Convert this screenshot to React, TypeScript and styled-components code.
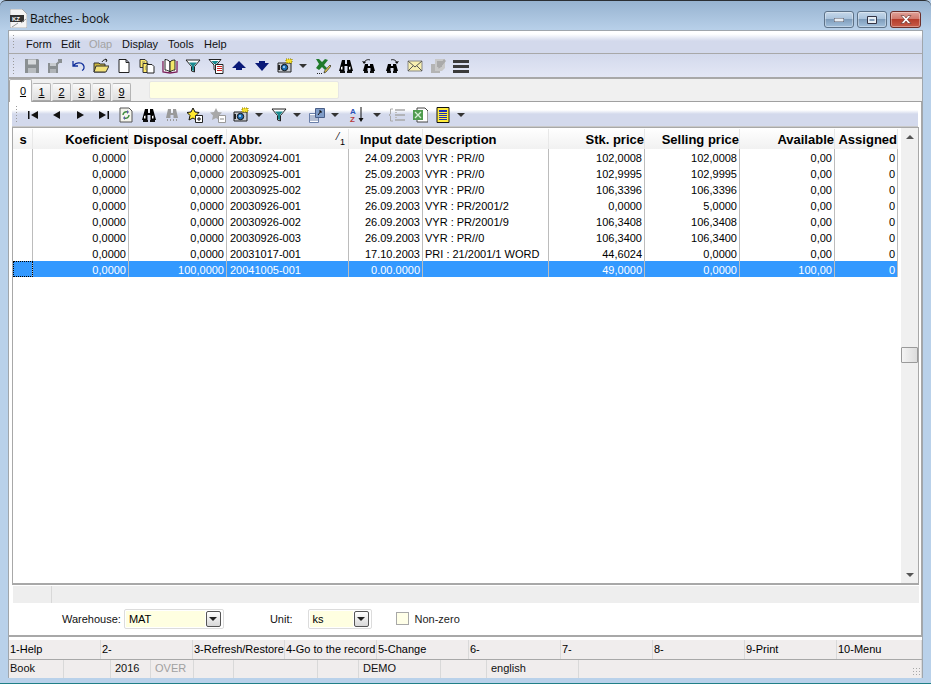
import React from "react";
import styled, { createGlobalStyle } from "styled-components";

const GlobalStyle = createGlobalStyle`
  html, body { margin: 0; padding: 0; background: #b9d1ea; }
  body { font-family: "Liberation Sans", Arial, sans-serif; font-size: 11px; color: #000; overflow: hidden; }
`;

const COLS = "20px 96px 98px 122px 74px 126px 96px 95px 95px 63px";

const Win = styled.div`
  width: 931px;
  height: 684px;
  box-sizing: border-box;
  display: flex;
  flex-direction: column;
  padding: 0 8px 0 8px;
  border-radius: 6px 6px 0 0;
  border-top: 1px solid #2b2f33;
  border-bottom: 1px solid #1f7f86;
  background: linear-gradient(#97b3d0 0, #b9d1ea 30px, #b9d1ea 100%);
`;

const TitleBar = styled.div`
  height: 29px;
  flex: none;
  box-sizing: border-box;
  display: flex;
  align-items: center;
  gap: 3px;
  padding: 5px 0 0 2px;
  color: #111;
`;

const TitleText = styled.span`
  flex: 1;
  font-family: "Open Sans", "Liberation Sans", sans-serif;
  font-size: 12px;
  letter-spacing: -0.25px;
`;

const WinBtns = styled.div`
  display: flex;
  gap: 3px;
  margin-right: 2px;
  align-self: flex-start;
  margin-top: 5px;
`;

const WinBtn = styled.div<{ $close?: boolean }>`
  width: ${(p) => (p.$close ? 31 : 30)}px;
  height: 17px;
  box-sizing: border-box;
  border: 1px solid ${(p) => (p.$close ? "#6d2f2a" : "#5d7288")};
  border-radius: 3px;
  display: flex;
  align-items: center;
  justify-content: center;
  background: ${(p) =>
    p.$close
      ? "linear-gradient(#e0a299 0, #d17a6e 45%, #b53d2c 50%, #c85c4a 100%)"
      : "linear-gradient(#c6d8ea 0, #aac3dc 45%, #7f9dbb 50%, #a3c0dc 100%)"};
  box-shadow: inset 0 0 0 1px rgba(255, 255, 255, 0.35);
`;

const Client = styled.div`
  flex: 1;
  min-height: 0;
  display: flex;
  flex-direction: column;
  background: #fff;
  border: 1px solid #a0a6ac;
  border-width: 1px 1px 0 1px;
  margin-bottom: 5px;
`;

const MenuBar = styled.div`
  height: 23px;
  flex: none;
  box-sizing: border-box;
  display: flex;
  align-items: flex-end;
  padding: 0 0 2px 17px;
  background: linear-gradient(#fff 0, #fff 3px, #d3d9ec 10px, #d3d9ec 100%);
  border-bottom: 1px solid #a8a8a8;
  position: relative;
`;

const Grip = styled.div`
  position: absolute;
  left: 3px;
  top: 3px;
  bottom: 3px;
  width: 3px;
  background-image: radial-gradient(#9a9a9a 0.8px, transparent 1px);
  background-size: 3px 3px;
`;

const MenuItem = styled.span<{ $off?: boolean; $w: number }>`
  width: ${(p) => p.$w}px;
  font-size: 11px;
  line-height: 14px;
  color: ${(p) => (p.$off ? "#a3a3a3" : "#111")};
`;

const ToolBar = styled.div<{ $pad: number; $h: number }>`
  height: ${(p) => p.$h}px;
  flex: none;
  box-sizing: border-box;
  display: flex;
  align-items: center;
  padding: 1px 0 0 ${(p) => p.$pad}px;
  position: relative;
  background: linear-gradient(#d3d9ec 0, #e3e7f5 100%);
  border-bottom: 2px solid #a8a8a8;
`;

const InnerBar = styled(ToolBar)`
  background: linear-gradient(#fff 0, #fff 8px, #d3d9ec 12px, #d3d9ec 100%);
  border-bottom: 1px solid #c8c8c8;
  align-items: flex-end;
  padding-bottom: 2px;
  margin: 0 3px 0 3px;
`;

const Tool = styled.div<{ $w?: number }>`
  width: ${(p) => p.$w ?? 23}px;
  height: 18px;
  flex: none;
  display: flex;
  align-items: center;
  justify-content: center;
`;

const Caret = styled.div`
  width: 15px;
  height: 18px;
  flex: none;
  box-sizing: border-box;
  padding-right: 2px;
  display: flex;
  align-items: center;
  justify-content: center;
  &::after {
    content: "";
    border-left: 4px solid transparent;
    border-right: 4px solid transparent;
    border-top: 4px solid #333;
  }
`;

const TabStrip = styled.div`
  height: 23px;
  flex: none;
  box-sizing: border-box;
  display: flex;
  align-items: flex-end;
  background: #f0f0f0;
  border-bottom: 1px solid #a0a0a0;
  position: relative;
`;

const Tab = styled.div<{ $on?: boolean }>`
  width: ${(p) => (p.$on ? 23 : 19)}px;
  height: ${(p) => (p.$on ? 23 : 18)}px;
  box-sizing: border-box;
  margin-right: ${(p) => (p.$on ? 0 : 1)}px;
  margin-bottom: ${(p) => (p.$on ? -1 : 0)}px;
  padding-left: ${(p) => (p.$on ? 5 : 0)}px;
  display: flex;
  align-items: center;
  justify-content: center;
  font-size: 11px;
  text-decoration: underline;
  background: ${(p) => (p.$on ? "#fff" : "linear-gradient(#fafafa, #dcdcdc)")};
  border: 1px solid #b4b4b4;
  border-bottom: ${(p) => (p.$on ? "none" : "1px solid #a8a8a8")};
  border-left-color: ${(p) => (p.$on ? "#a8a8a8" : "#e8e8e8")};
  border-radius: 2px 2px 0 0;
`;

const TabNote = styled.div`
  width: 190px;
  height: 18px;
  margin: 0 0 2px 17px;
  background: #ffffe1;
  border: 1px solid #e6e6e6;
  box-sizing: border-box;
  border-radius: 2px;
`;

const Pane = styled.div`
  flex: 1;
  min-height: 0;
  display: flex;
  flex-direction: column;
  background: #fff;
  border-bottom: 2px solid #a8a8a8;
  border-right: 1px solid #a8a8a8;
`;

const TableFrame = styled.div`
  flex: 1;
  min-height: 0;
  display: flex;
  margin: 0 2px 0 3px;
  border: 1px solid #a8a8a8;
  border-width: 1px 1px 2px 1px;
  background: #fff;
`;

const Grid = styled.div`
  flex: 1;
  min-width: 0;
  display: flex;
  flex-direction: column;
`;

const HeadRow = styled.div`
  display: grid;
  grid-template-columns: ${COLS};
  height: 21px;
  box-sizing: border-box;
  padding-top: 1px;
  flex: none;
  background: linear-gradient(#fff 0, #f1f1f1 100%);
`;

const HeadCell = styled.div<{ $align?: string }>`
  position: relative;
  display: flex;
  align-items: center;
  justify-content: ${(p) => p.$align ?? "flex-end"};
  padding: 0 0 0 ${(p) => (p.$align === "flex-start" ? 2 : 1)}px;
  font-size: 13px;
  font-weight: bold;
  white-space: nowrap;
  overflow: hidden;
  border-right: 1px solid #e8e8e8;
`;

const SortMark = styled.span`
  position: absolute;
  right: 4px;
  top: 3px;
  font-size: 10px;
  font-weight: normal;
  line-height: 10px;
`;

const SortRank = styled.span`
  position: relative;
  top: 5px;
  left: 1px;
  font-size: 9px;
`;

const Row = styled.div<{ $sel?: boolean }>`
  display: grid;
  grid-template-columns: ${COLS};
  height: 16px;
  flex: none;
  background: ${(p) => (p.$sel ? "#3399ff" : "#fff")};
  color: ${(p) => (p.$sel ? "#fff" : "#000")};
`;

const Cell = styled.div<{ $left?: number }>`
  box-sizing: border-box;
  padding: 0 2px 0 ${(p) => p.$left ?? 2}px;
  font-size: 11px;
  line-height: 18px;
  text-align: ${(p) => (p.$left ? "left" : "right")};
  white-space: nowrap;
  overflow: hidden;
  border-right: 1px solid #bcbcbc;
`;

const MarkCell = styled.div<{ $sel?: boolean }>`
  box-sizing: border-box;
  border-right: 1px solid #bcbcbc;
  outline: ${(p) => (p.$sel ? "1px dotted #000" : "none")};
  outline-offset: -1px;
`;

const ScrollBar = styled.div`
  width: 17px;
  flex: none;
  margin-left: 3px;
  background: #f0f0f0;
  display: flex;
  flex-direction: column;
  align-items: stretch;
`;

const ScrollEnd = styled.div<{ $down?: boolean }>`
  height: 17px;
  flex: none;
  display: flex;
  align-items: center;
  justify-content: center;
  &::after {
    content: "";
    border-left: 4px solid transparent;
    border-right: 4px solid transparent;
    ${(p) => (p.$down ? "border-top: 4px solid #555;" : "border-bottom: 4px solid #555;")}
  }
`;

const ScrollSpace = styled.div<{ $fill?: boolean }>`
  ${(p) => (p.$fill ? "flex: 1;" : "height: 202px; flex: none;")}
`;

const Thumb = styled.div`
  height: 16px;
  flex: none;
  box-sizing: border-box;
  border: 1px solid #9a9a9a;
  border-radius: 1px;
  background: linear-gradient(90deg, #f4f4f4, #dcdcdc);
`;

const InfoBar = styled.div`
  height: 17px;
  flex: none;
  margin: 1px 2px 0 4px;
  display: flex;
  background: #eeeeee;
`;

const InfoCell = styled.div`
  width: 38px;
  border-right: 1px solid #d8d8d8;
`;

const FilterRow = styled.div`
  height: 32px;
  flex: none;
  display: flex;
  align-items: center;
  padding-bottom: 1px;
  box-sizing: border-box;
`;

const FieldLabel = styled.span<{ $ml: number; $mr: number }>`
  margin-left: ${(p) => p.$ml}px;
  margin-right: ${(p) => p.$mr}px;
  font-size: 11px;
  color: #111;
`;

const Combo = styled.div<{ $w: number }>`
  width: ${(p) => p.$w}px;
  height: 20px;
  box-sizing: border-box;
  display: flex;
  align-items: center;
  border: 1px solid #dcdcdc;
  border-radius: 2px;
  padding: 1px;
`;

const ComboText = styled.div`
  flex: 1;
  align-self: stretch;
  background: #ffffe1;
  padding-left: 3px;
  font-size: 11px;
  line-height: 17px;
`;

const ComboBtn = styled.div`
  width: 15px;
  height: 16px;
  margin: 0 1px 0 1px;
  box-sizing: border-box;
  border: 1px solid #555;
  border-radius: 2px;
  background: linear-gradient(#fff, #d8d8d8);
  display: flex;
  align-items: center;
  justify-content: center;
  &::after {
    content: "";
    border-left: 4px solid transparent;
    border-right: 4px solid transparent;
    border-top: 4px solid #222;
  }
`;

const Check = styled.div`
  width: 13px;
  height: 13px;
  margin-left: 24px;
  box-sizing: border-box;
  border: 1px solid #a8a8a8;
  background: #ffffe8;
`;

const CheckLabel = styled.span`
  margin-left: 6px;
  margin-top: 1px;
  font-size: 11px;
  color: #222;
`;

const FnRow = styled.div`
  height: 19px;
  flex: none;
  margin-top: 3px;
  display: grid;
  grid-template-columns: repeat(9, 92px) 1fr;
  background: #f0eded;
  border-bottom: 1px solid #a8a8a8;
`;

const FnCell = styled.div`
  padding-left: 1px;
  border-right: 1px solid #d9d9d9;
  font-size: 11px;
  line-height: 19px;
  white-space: nowrap;
  overflow: hidden;
`;

const StatusRow = styled.div`
  height: 18px;
  flex: none;
  display: flex;
  background: #f0eded;
  position: relative;
`;

const StatusCell = styled.div<{ $w?: number; $off?: boolean; $pad?: number }>`
  ${(p) => (p.$w ? `width: ${p.$w}px; flex: none;` : "flex: 1;")}
  box-sizing: border-box;
  padding-left: ${(p) => p.$pad ?? 4}px;
  font-size: 11px;
  line-height: 17px;
  color: ${(p) => (p.$off ? "#a0a0a0" : "#111")};
  border-right: 1px solid #d9d9d9;
`;

const SizeGrip = styled.div`
  position: absolute;
  right: 1px;
  bottom: 2px;
  width: 9px;
  height: 9px;
  background-image: radial-gradient(#a8a8a8 0.8px, transparent 1px);
  background-size: 3px 3px;
`;

const Svg = styled.svg`
  display: block;
  flex: none;
`;

const paths: Record<string, React.ReactNode> = {
  save: (
    <>
      <path d="M1 1h13l1 1v13H1z" fill="#8a8f92" />
      <path d="M4 1.500h8v5H4z" fill="#d6d9dc" />
      <path d="M4 10h8v5H4z" fill="#b8bcc0" />
    </>
  ),
  saveas: (
    <>
      <path d="M1 5h10v10H1z" fill="#8a8f92" />
      <path d="M3 5h6v3H3z" fill="#c8ccd0" />
      <path d="M3 11h6v4H3z" fill="#b0b4b8" />
      <path d="M10 6l4-4m-3 0h3v3" fill="none" stroke="#8a8f92" strokeWidth="2" />
    </>
  ),
  undo: <path d="M3 3v5h5M3.500 7.500C6 4.500 11 4 13 6.500s1 5-1 6" fill="none" stroke="#12309c" strokeWidth="1.300" />,
  open: (
    <>
      <path d="M1 5h5l1 1h5v8H1z" fill="#c9b23c" stroke="#333" />
      <path d="M3 8h13l-3 6H1z" fill="#f3e27a" stroke="#333" />
      <path d="M9 4c1-2 3-3 5-2m0 0l-2-1m2 1l-1 2" fill="none" stroke="#222" />
    </>
  ),
  doc: <path d="M3 1.500h7l3 3v10H3z M10 1.500v3h3" fill="#fff" stroke="#222" />,
  copy: (
    <>
      <path d="M1 1.500h5l2 2v6H1z" fill="#ffe96b" stroke="#333" />
      <path d="M4 5.500h5l2 2v7H4z" fill="#ffe96b" stroke="#333" />
      <path d="M8 6.500h5l2 2v6.500H8z" fill="#fff" stroke="#222" />
      <path d="M3 4h3M6 9h3M6 11h3" stroke="#886" />
    </>
  ),
  book: (
    <>
      <path d="M1 3v11l7 1 7-1V3" fill="#fff" stroke="#7a1f5a" strokeWidth="1.300" />
      <path d="M3 1.500c2 0 4 1 5 2.500v10c-1-1-3-2-5-2z" fill="#fff" stroke="#222" />
      <path d="M8 4c1-1.500 3-2 5-2v10c-2 0-4 1-5 2z" fill="#f2e96a" stroke="#222" />
    </>
  ),
  filter: (
    <>
      <path d="M1 2h14L9.500 8.500V14l-3-1V8.500z" fill="#fff" stroke="#222" />
      <path d="M4 4.500h8L9 8H7z" fill="#1b8a8f" />
      <path d="M7 8h2v5l-2-.7z" fill="#1b8a8f" />
    </>
  ),
  filterdoc: (
    <>
      <path d="M1 1.500h12L8.500 7v5.500l-2.500-1V7z" fill="#fff" stroke="#222" />
      <path d="M3.500 3h7L8 6H6z" fill="#1b8a8f" />
      <path d="M7.500 6.500h7.500v9H7.500z" fill="#fff" stroke="#222" />
      <path d="M9 8.500h5M9 10.500h5M9 12.500h5" stroke="#c22" />
    </>
  ),
  up: <path d="M8 3l7 7h-4v2H5v-2H1z" fill="#0a1a78" />,
  down: <path d="M5 3h6v2h4l-7 8-7-8h4z" fill="#0a1a78" />,
  camera: (
    <>
      <path d="M1 5h13v9H1z" fill="#c8ccd2" stroke="#222" />
      <circle cx="7.500" cy="9.500" r="3.200" fill="#1f6fb5" stroke="#111" />
      <circle cx="7" cy="9" r="1" fill="#bfe3ff" />
      <path d="M9 1h6v4H9z" fill="#f5e030" stroke="#8a7a00" strokeDasharray="1 1" />
      <path d="M1 7h2v5H1z" fill="#222" />
    </>
  ),
  xlsedit: (
    <>
      <path d="M1 1h3l3 3 3-3 3 1-4 5 3 3-2 2-3-3-3 3-3-2 3-4z" fill="#1f7a2a" />
      <path d="M15 7l1 1-5 6-2 1 .5-2z" fill="#f5d94a" stroke="#222" strokeWidth=".7" />
      <path d="M2 15.500h1M4 15.500h1M6 15.500h1" stroke="#222" />
    </>
  ),
  bino: (
    <>
      <path d="M4 2h3v4h2V2h3l3 11H9.500V8h-3v5H1z" fill="#000" />
      <path d="M2 13h5v2H2zM9 13h5v2H9z" fill="#111" />
      <path d="M3 9l1.500-.5v3H3zM11 9l1.500-.5v3H11z" fill="#fff" />
    </>
  ),
  binoprev: (
    <>
      <path d="M4 6h3v2h2V6h3l2 7H9.500v-3h-3v3H2z" fill="#000" />
      <path d="M3 13h4v2H3zM9 13h4v2H9z" fill="#111" />
      <path d="M3 5c1-3 4-4 6-3" fill="none" stroke="#111" />
      <path d="M1 3l2 3 2-2z" fill="#111" />
    </>
  ),
  binonext: (
    <>
      <path d="M4 6h3v2h2V6h3l2 7H9.500v-3h-3v3H2z" fill="#000" />
      <path d="M3 13h4v2H3zM9 13h4v2H9z" fill="#111" />
      <path d="M13 5c-1-3-4-4-6-3" fill="none" stroke="#111" />
      <path d="M15 3l-2 3-2-2z" fill="#111" />
    </>
  ),
  binooff: (
    <>
      <path d="M4 2h3v4h2V2h3l2 9H9.500V8h-3v3H2z" fill="#9a9a9a" />
      <path d="M3 13h1M6 13h1M9 13h1M12 13h1" stroke="#9a9a9a" strokeWidth="2" />
    </>
  ),
  mail: (
    <>
      <path d="M1 3h14v10H1z" fill="#f7efb0" stroke="#888" />
      <path d="M1 3l7 6 7-6M1 13l5-5M15 13l-5-5" fill="none" stroke="#555" />
    </>
  ),
  notes: (
    <>
      <path d="M1 6h8l1 1v8H1z" fill="#b4b4b4" />
      <path d="M5 1h10v9l-3 3H5z" fill="#c8c8c8" />
      <path d="M7 4h6M7 6h6M7 8h5" stroke="#8c8c8c" />
      <path d="M14 1l2 2-6 7-2 .5.500-2z" fill="#aaa" />
    </>
  ),
  lines: <path d="M0 2h16v3H0zM0 7h16v3H0zM0 12h16v3H0z" fill="#3a3a3a" />,
  first: <path d="M2 4h1.500v8H2zM12 4v8L5 8z" fill="#111" />,
  prev: <path d="M11 4v8L4 8z" fill="#111" />,
  next: <path d="M5 4v8l7-4z" fill="#111" />,
  last: <path d="M12.500 4H14v8h-1.500zM4 4v8l7-4z" fill="#111" />,
  refresh: (
    <>
      <path d="M2 1h9l3 3v11H2z" fill="#f4f4ec" stroke="#555" />
      <path d="M5 8c0-2 2-4 5-3M11 8c0 2-2 4-5 3" fill="none" stroke="#3c8a3c" strokeWidth="1.400" />
      <path d="M9 3l2 2-2 2zM7 9l-2 2 2 2z" fill="#5a5aa8" />
    </>
  ),
  staradd: (
    <>
      <path d="M6 1l2 4 4 .5-3 3 1 5-4-2.500L2 13l1-4.500L0 5.500 4 5z" fill="#ffe92e" stroke="#111" />
      <path d="M8.500 8.500h7v7h-7z" fill="#fff" stroke="#222" />
      <path d="M10 12h4M12 10v4" stroke="#111" />
    </>
  ),
  stardel: (
    <>
      <path d="M6 1l2 4 4 .5-3 3 1 5-4-2.500L2 13l1-4.500L0 5.500 4 5z" fill="#a8a8a8" />
      <path d="M8.500 8.500h7v7h-7z" fill="#fff" stroke="#999" />
      <path d="M10 12h4" stroke="#888" />
    </>
  ),
  struct: (
    <>
      <path d="M.5 6.500h9v9h-9z" fill="#fff" stroke="#6a7fa8" />
      <path d="M1 9h8M1 11h8M1 13h8" stroke="#6a7fa8" />
      <path d="M6.500 1.500h9v9h-9z" fill="#7f9cc8" stroke="#4a5f88" />
      <path d="M9 8l3-4m-2 0h2v2" fill="none" stroke="#111" />
    </>
  ),
  sort: (
    <>
      <text x="1" y="7" fontSize="8" fontWeight="bold" fill="#2a52b8" fontFamily="Liberation Sans">A</text>
      <text x="1" y="15" fontSize="8" fontWeight="bold" fill="#b83a3a" fontFamily="Liberation Sans">Z</text>
      <path d="M12 0v13" stroke="#111" />
      <path d="M9.500 11h5L12 15z" fill="#111" />
    </>
  ),
  listoff: (
    <>
      <path d="M4 2H1.500v5L0 8l1.500 1v5H4" fill="none" stroke="#a8a8a8" />
      <path d="M6 3h10M6 8h10M6 13h10" stroke="#a8a8a8" strokeWidth="1.500" />
      <path d="M6 5h2v1H6zM6 10h2v1H6z" fill="#bbb" />
    </>
  ),
  excel: (
    <>
      <path d="M5 1h8l3 3v11H5z" fill="#fff" stroke="#444" />
      <path d="M1 3h10v10H1z" fill="#4f9c4f" />
      <path d="M3 5l6 6M9 5l-6 6" stroke="#d6efd6" strokeWidth="1.300" />
    </>
  ),
  table: (
    <>
      <path d="M2 .5h12v15H2z" fill="#ffec3d" stroke="#111" />
      <path d="M4 3h8v2H4zM4 6h8v1H4zM4 8h8v1H4zM4 10h8v1H4zM4 12h8v1H4z" fill="#1c2fb8" />
    </>
  ),
};

const Icon = ({ name }: { name: string }) => (
  <Svg width="16" height="16" viewBox="0 0 16 16">
    {paths[name]}
  </Svg>
);

const Logo = () => (
  <Svg width="17" height="19" viewBox="0 0 17 19">
    <path d="M0 0h12l5 5v14H0z" fill="#f4f4f4" stroke="#777" strokeWidth=".5" />
    <path d="M0 6h14v7H0z" fill="#333" />
    <text x="2" y="12" fontSize="6" fontWeight="bold" fill="#fff" fontFamily="Liberation Sans">KZ</text>
    <path d="M11 14l5-4M2 18l6-4" stroke="#999" />
  </Svg>
);

const menu = [
  { t: "Form", w: 35 },
  { t: "Edit", w: 28 },
  { t: "Olap", w: 33, off: true },
  { t: "Display", w: 46 },
  { t: "Tools", w: 36 },
  { t: "Help", w: 30 },
];

const topTools = ["save", "saveas", "undo", "open", "doc", "copy", "book", "filter", "filterdoc", "up", "down", "camera", "|", "xlsedit", "bino", "binoprev", "binonext", "mail", "notes", "lines"];
const subTools = ["first", "prev", "next", "last", "refresh", "bino", "binooff", "staradd", "stardel", "camera", "|", "filter", "|", "struct", "|", "sort", "|", "listoff", "excel", "table", "|"];

const heads: { t: string; align?: string; sort?: boolean }[] = [
  { t: "s", align: "center" },
  { t: "Koeficient" },
  { t: "Disposal coeff." },
  { t: "Abbr.", align: "flex-start", sort: true },
  { t: "Input date" },
  { t: "Description", align: "flex-start" },
  { t: "Stk. price" },
  { t: "Selling price" },
  { t: "Available" },
  { t: "Assigned" },
];

const rows = [
  ["0,0000", "0,0000", "20030924-001", "24.09.2003", "VYR : PR//0", "102,0008", "102,0008", "0,00", "0"],
  ["0,0000", "0,0000", "20030925-001", "25.09.2003", "VYR : PR//0", "102,9995", "102,9995", "0,00", "0"],
  ["0,0000", "0,0000", "20030925-002", "25.09.2003", "VYR : PR//0", "106,3396", "106,3396", "0,00", "0"],
  ["0,0000", "0,0000", "20030926-001", "26.09.2003", "VYR : PR/2001/2", "0,0000", "5,0000", "0,00", "0"],
  ["0,0000", "0,0000", "20030926-002", "26.09.2003", "VYR : PR/2001/9", "106,3408", "106,3408", "0,00", "0"],
  ["0,0000", "0,0000", "20030926-003", "26.09.2003", "VYR : PR//0", "106,3400", "106,3400", "0,00", "0"],
  ["0,0000", "0,0000", "20031017-001", "17.10.2003", "PRI : 21/2001/1 WORD", "44,6024", "0,0000", "0,00", "0"],
  ["0,0000", "100,0000", "20041005-001", "0.00.0000", "", "49,0000", "0,0000", "100,00", "0"],
];

// left padding of the text columns, the others are right aligned
const leftPad: Record<number, number> = { 2: 3, 4: 2 };

const fnKeys = ["1-Help", "2-", "3-Refresh/Restore", "4-Go to the record", "5-Change", "6-", "7-", "8-", "9-Print", "10-Menu"];

const status: { t: string; w?: number; off?: boolean; pad?: number }[] = [
  { t: "Book", w: 55, pad: 1 },
  { t: "", w: 47 },
  { t: "2016", w: 40 },
  { t: "OVER", w: 43, off: true },
  { t: "", w: 40 },
  { t: "", w: 84 },
  { t: "", w: 41 },
  { t: "DEMO", w: 82 },
  { t: "", w: 46 },
  { t: "english", w: 92 },
  { t: "" },
];

const renderTools = (list: string[]) =>
  list.map((n, i) =>
    n === "|" ? (
      <Caret key={i} />
    ) : (
      <Tool key={i} $w={n === "sort" ? 27 : 23}>
        <Icon name={n} />
      </Tool>
    )
  );

export default function App() {
  return (
    <>
      <GlobalStyle />
      <Win>
        <TitleBar>
          <Logo />
          <TitleText>Batches - book</TitleText>
          <WinBtns>
            <WinBtn>
              <Svg width="10" height="4" viewBox="0 0 10 4">
                <path d="M0 0h10v4H0z" fill="#e8eef4" stroke="#334" strokeWidth=".8" />
              </Svg>
            </WinBtn>
            <WinBtn>
              <Svg width="10" height="8" viewBox="0 0 10 8">
                <path d="M.5.5h9v7h-9z" fill="#e8eef4" stroke="#334" />
                <path d="M2.500 3h5v2h-5z" fill="#7f9dbb" />
              </Svg>
            </WinBtn>
            <WinBtn $close>
              <Svg width="12" height="9" viewBox="0 0 12 9">
                <path d="M1 .5h3L6 3 8 .5h3L7.500 4.500 11 8.500H8L6 6 4 8.500H1l3.500-4z" fill="#fff" stroke="#5a2a26" strokeWidth=".6" />
              </Svg>
            </WinBtn>
          </WinBtns>
        </TitleBar>
        <Client>
          <MenuBar>
            <Grip />
            {menu.map((m) => (
              <MenuItem key={m.t} $w={m.w} $off={m.off}>
                {m.t}
              </MenuItem>
            ))}
          </MenuBar>
          <ToolBar $pad={11} $h={25}>
            <Grip />
            {renderTools(topTools)}
          </ToolBar>
          <TabStrip>
            <Tab $on>0</Tab>
            {["1", "2", "3", "8", "9"].map((t) => (
              <Tab key={t}>{t}</Tab>
            ))}
            <TabNote />
          </TabStrip>
          <Pane>
            <InnerBar $pad={10} $h={25}>
              <Grip />
              {renderTools(subTools)}
            </InnerBar>
            <TableFrame>
              <Grid>
                <HeadRow>
                  {heads.map((h) => (
                    <HeadCell key={h.t} $align={h.align}>
                      {h.t}
                      {h.sort && (
                        <SortMark>
                          ⁄<SortRank>1</SortRank>
                        </SortMark>
                      )}
                    </HeadCell>
                  ))}
                </HeadRow>
                {rows.map((r, i) => {
                  const sel = i === rows.length - 1;
                  return (
                    <Row key={i} $sel={sel}>
                      <MarkCell $sel={sel} />
                      {r.map((c, j) => (
                        <Cell key={j} $left={leftPad[j]}>
                          {c}
                        </Cell>
                      ))}
                    </Row>
                  );
                })}
              </Grid>
              <ScrollBar>
                <ScrollEnd />
                <ScrollSpace />
                <Thumb />
                <ScrollSpace $fill />
                <ScrollEnd $down />
              </ScrollBar>
            </TableFrame>
            <InfoBar>
              <InfoCell />
            </InfoBar>
            <FilterRow>
              <FieldLabel $ml={53} $mr={3}>Warehouse:</FieldLabel>
              <Combo $w={100}>
                <ComboText>MAT</ComboText>
                <ComboBtn />
              </Combo>
              <FieldLabel $ml={46} $mr={15}>Unit:</FieldLabel>
              <Combo $w={64}>
                <ComboText>ks</ComboText>
                <ComboBtn />
              </Combo>
              <Check />
              <CheckLabel>Non-zero</CheckLabel>
            </FilterRow>
          </Pane>
          <FnRow>
            {fnKeys.map((f) => (
              <FnCell key={f}>{f}</FnCell>
            ))}
          </FnRow>
          <StatusRow>
            {status.map((s, i) => (
              <StatusCell key={i} $w={s.w} $off={s.off} $pad={s.pad}>
                {s.t}
              </StatusCell>
            ))}
            <SizeGrip />
          </StatusRow>
        </Client>
      </Win>
    </>
  );
}
